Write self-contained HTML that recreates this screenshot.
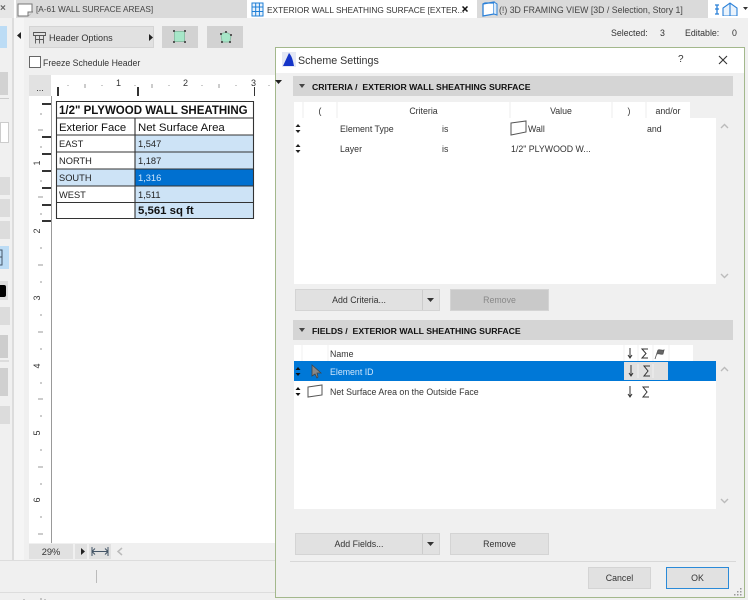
<!DOCTYPE html>
<html><head><meta charset="utf-8"><style>
html,body{margin:0;padding:0;width:748px;height:600px;overflow:hidden;background:#f0f0f0}
#r{position:relative;width:748px;height:600px;overflow:hidden;font-family:"Liberation Sans",sans-serif;font-size:8.8px;color:#333;filter:blur(.35px)}
#r div,#r svg{position:absolute}
.t{white-space:nowrap;line-height:12px;margin-top:1px}
.c{text-align:center}
.b{background:#e1e1e1;border:1px solid #d4d4d4;box-sizing:border-box}
.g{background:#d6d6d6}
.w{background:#fff}
.h{background:#d5d5d5;font-weight:bold;color:#111;font-size:8.7px;line-height:23px;height:20px;white-space:nowrap;box-sizing:border-box;padding-left:19px}
.rh{background:#333;height:1.5px}
.rt{transform:rotate(-90deg);font-size:9px;color:#333;width:12px;text-align:center;line-height:10px}
</style></head><body><div id="r">
<!-- tab bar -->
<div class="w" style="left:0;top:0;width:748px;height:18px"></div>
<div class="g" style="left:0;top:0;width:14px;height:18px;background:#e6e6e6"></div>
<div class="t" style="left:0;top:2px;color:#666;font-weight:bold;font-size:10px">×</div>
<div class="g" style="left:16px;top:0;width:231px;height:18px;background:#dadada"></div>
<div class="g" style="left:477px;top:0;width:231px;height:18px;background:#dadada"></div>
<svg style="left:17px;top:3px" width="18" height="14"><path d="M1 1h14v8l-4 4H1z" fill="#fff" stroke="#777" stroke-width="1"/><path d="M11 13V9h5" fill="#ddd" stroke="#777"/></svg>
<div class="t" style="left:36px;top:3px;color:#444;font-size:8.25px">[A-61 WALL SURFACE AREAS]</div>
<svg style="left:251px;top:1px" width="14" height="16"><path d="M1 2h11v13H1zM1 6h11M1 10.500h11M4.700 2v13M8.400 2v13" fill="#eaf3fc" stroke="#1f7fd6" stroke-width="1"/></svg>
<div class="t" style="left:267px;top:3px;color:#333;font-size:8.3px">EXTERIOR WALL SHEATHING SURFACE [EXTER...</div>
<svg style="left:462px;top:6px" width="6" height="6"><path d="M.5.500l5 5M5.500.500l-5 5" stroke="#111" stroke-width="1.500"/></svg>
<svg style="left:481px;top:1px" width="17" height="17"><path d="M2 3l11-2v12l-11 2zM2 3l2-1h9" fill="#fff" stroke="#2a80d8" stroke-width="1.300"/><path d="M13 1l3 2v11l-3-1" fill="#dcebf9" stroke="#2a80d8"/></svg>
<div class="t" style="left:499px;top:3px;color:#444;font-size:8.75px">(!) 3D FRAMING VIEW [3D / Selection, Story 1]</div>
<svg style="left:714px;top:2px" width="34" height="14"><path d="M1 3h4M3 3v9M1 7h4M1 12h4" fill="none" stroke="#2a80d8" stroke-width="1.300"/><path d="M9 14V6l7-5 7 5v8zM16 1v13" fill="#eaf3fc" stroke="#2a80d8" stroke-width="1.100"/><path d="M29 5h5l-2.500 3z" fill="#333"/></svg>
<!-- left toolbar -->
<div style="left:0;top:26px;width:7px;height:22px;background:#bcdcf5"></div>
<div style="left:0;top:72px;width:8px;height:23px;background:#d2d2d2"></div>
<div style="left:0;top:98px;width:9px;height:1px;background:#ccc"></div>
<div style="left:0;top:122px;width:9px;height:21px;background:#fff;border:1px solid #ccc;box-sizing:border-box"></div>
<div style="left:0;top:177px;width:10px;height:18px;background:#dcdcdc"></div>
<div style="left:0;top:199px;width:10px;height:18px;background:#dcdcdc"></div>
<div style="left:0;top:221px;width:10px;height:18px;background:#dcdcdc"></div>
<div style="left:0;top:246px;width:9px;height:23px;background:#bcdcf5"></div>
<svg style="left:0;top:249px" width="4" height="17"><path d="M-3 1h5v15h-5M-3 8h5" fill="none" stroke="#456"/></svg>
<div style="left:0;top:281px;width:8px;height:19px;background:#dcdcdc"></div>
<div style="left:0;top:285px;width:6px;height:12px;background:#000;border-radius:0 2px 2px 0"></div>
<div style="left:0;top:307px;width:10px;height:18px;background:#dcdcdc"></div>
<div style="left:0;top:335px;width:8px;height:23px;background:#cdcdcd"></div>
<div style="left:0;top:360px;width:9px;height:2px;background:#ddd"></div>
<div style="left:0;top:368px;width:8px;height:28px;background:#d0d0d0"></div>
<div style="left:0;top:406px;width:10px;height:18px;background:#dcdcdc"></div>
<!-- vertical separators -->
<div style="left:12px;top:18px;width:2px;height:542px;background:#dcdcdc"></div>
<div style="left:14px;top:18px;width:10px;height:542px;background:#f5f5f5"></div>
<svg style="left:17px;top:32px" width="5" height="8"><path d="M4 0v7L0 3.500z" fill="#222"/></svg>
<!-- header options -->
<div class="b" style="left:29px;top:26px;width:125px;height:22px"></div>
<svg style="left:32px;top:31px" width="15" height="13"><path d="M1.500 1.500h12v3h-12zM3.500 4.500v8M11.500 4.500v8M7.500 4.500v8M3.500 8.500h8" fill="none" stroke="#555" stroke-width=".9"/></svg>
<div class="t" style="left:49px;top:31px;color:#333;font-size:9.1px">Header Options</div>
<svg style="left:149px;top:34px" width="5" height="7"><path d="M0 0v7l4-3.500z" fill="#222"/></svg>
<div style="left:162px;top:26px;width:36px;height:22px;background:#d2d2d2"></div>
<div style="left:207px;top:26px;width:36px;height:22px;background:#d2d2d2"></div>
<svg style="left:172px;top:29px" width="16" height="16"><rect x="2.500" y="2.500" width="10" height="10" fill="#a7e6c8" stroke="#8cbfa6"/><path d="M1 1h2v2H1zM12 1h2v2h-2zM1 12h2v2H1zM12 12h2v2h-2z" fill="#555"/></svg>
<svg style="left:218px;top:29px" width="16" height="16"><path d="M3 5l5-2 5 3-1 7H4z" fill="#a7e6c8" stroke="#8cbfa6"/><path d="M2 4h2v2H2zM7 2h2v2H7zM12 5h2v2h-2zM3 12h2v2H3zM11 12h2v2h-2z" fill="#555"/></svg>
<div style="left:29px;top:56px;width:12px;height:12px;background:#fff;border:1px solid #666;box-sizing:border-box"></div>
<div class="t" style="left:43px;top:56px;color:#333;font-size:8.75px">Freeze Schedule Header</div>
<!-- rulers and canvas -->
<div class="w" style="left:29px;top:75px;width:247px;height:468px"></div>
<div style="left:29px;top:75px;width:22px;height:21px;background:#e2e2e2"></div>
<div class="t c" style="left:29px;top:81px;width:22px;font-size:9px;color:#333">...</div>
<div style="left:51px;top:96px;width:1px;height:447px;background:#999"></div>
<!-- top ruler -->
<div style="left:57px;top:87px;width:1.500px;height:9px;background:#333"></div>
<div style="left:137px;top:87px;width:1.500px;height:9px;background:#333"></div>
<div style="left:253.500px;top:87px;width:1.500px;height:9px;background:#333"></div>
<div class="t" style="left:116px;top:76px;font-size:9px">1</div>
<div class="t" style="left:183px;top:76px;font-size:9px">2</div>
<div class="t" style="left:251px;top:76px;font-size:9px">3</div>
<svg style="left:60px;top:82px" width="215" height="6"><path d="M8 3v1M25 2v4M42 3v1M75 3v1M92 2v4M109 3v1M142 3v1M159 2v4M176 3v1M209 3v1" stroke="#999" stroke-width="1"/></svg>
<!-- vertical ruler heavy -->
<div class="rh" style="left:42px;top:103px;width:9px"></div>
<div class="rh" style="left:42px;top:136px;width:9px"></div>
<div class="rh" style="left:42px;top:153px;width:9px"></div>
<div class="rh" style="left:42px;top:170px;width:9px"></div>
<div class="rh" style="left:42px;top:187px;width:9px"></div>
<div class="rh" style="left:42px;top:204px;width:9px"></div>
<div class="rh" style="left:42px;top:220px;width:9px"></div>
<svg style="left:36px;top:100px" width="10" height="445"><path d="M4 14h2M2 30h5M4 47h2M4 81h2M2 97h5M4 114h2M4 148h2M2 165h5M4 182h2M4 215h2M2 232h5M4 249h2M4 283h2M2 299h5M4 316h2M4 350h2M2 367h5M4 384h2M4 417h2M2 434h5" stroke="#999" stroke-width="1" fill="none"/></svg>
<div class="rt" style="left:31px;top:158px">1</div>
<div class="rt" style="left:31px;top:226px">2</div>
<div class="rt" style="left:31px;top:293px">3</div>
<div class="rt" style="left:31px;top:361px">4</div>
<div class="rt" style="left:31px;top:428px">5</div>
<div class="rt" style="left:31px;top:495px">6</div>
<!-- schedule table -->
<div style="left:56px;top:101px;width:197px;height:118px;background:#fff"></div>
<div style="left:135px;top:135px;width:118px;height:84px;background:#cde3f6"></div>
<div style="left:56px;top:169px;width:79px;height:17px;background:#cde3f6"></div>
<div style="left:135px;top:169px;width:118px;height:17px;background:#0070d0"></div>
<svg style="left:54.500px;top:100px" width="200" height="120"><path d="M1.500 1.500h197v117H1.500zM1.500 18h197M1.500 35h197M1.500 52h197M1.500 69h197M1.500 86h197M1.500 102.500h197M80 18v100.500" fill="none" stroke="#333" stroke-width="1.100"/></svg>
<div class="t" style="left:59px;top:104px;font-weight:bold;font-size:11.5px;color:#111">1/2" PLYWOOD WALL SHEATHING</div>
<div class="t" style="left:59px;top:120.500px;font-size:11.3px;color:#111">Exterior Face</div>
<div class="t" style="left:138px;top:120.500px;font-size:11.4px;color:#111">Net Surface Area</div>
<div class="t" style="left:59px;top:137px;font-size:9.300px;color:#222">EAST</div>
<div class="t" style="left:59px;top:154px;font-size:9.300px;color:#222">NORTH</div>
<div class="t" style="left:59px;top:171px;font-size:9.300px;color:#222">SOUTH</div>
<div class="t" style="left:59px;top:188px;font-size:9.300px;color:#222">WEST</div>
<div class="t" style="left:138px;top:137px;font-size:9.300px;color:#222">1,547</div>
<div class="t" style="left:138px;top:154px;font-size:9.300px;color:#222">1,187</div>
<div class="t" style="left:138px;top:171px;font-size:9.300px;color:#cfe6fb">1,316</div>
<div class="t" style="left:138px;top:188px;font-size:9.300px;color:#222">1,511</div>
<div class="t" style="left:138px;top:204px;font-size:11.4px;font-weight:bold;color:#111">5,561 sq ft</div>
<!-- bottom status -->
<div style="left:29px;top:543px;width:246px;height:17px;background:#f0f0f0"></div>
<div style="left:29px;top:544px;width:44px;height:15px;background:#e1e1e1"></div>
<div class="t c" style="left:29px;top:545px;width:44px;font-size:9.300px">29%</div>
<div style="left:75px;top:544px;width:12px;height:15px;background:#e1e1e1"></div>
<svg style="left:81px;top:548px" width="5" height="7"><path d="M0 0v7l4-3.500z" fill="#222"/></svg>
<div style="left:89px;top:544px;width:22px;height:15px;background:#e1e1e1"></div>
<svg style="left:90px;top:546px" width="20" height="11"><path d="M2 1v9M18 1v9M2 5.500h16M2 5.500l3-3M2 5.500l3 3M18 5.500l-3-3M18 5.500l-3 3" fill="none" stroke="#456" stroke-width="1"/></svg>
<svg style="left:116px;top:547px" width="7" height="9"><path d="M6 1L2 4.500 6 8" fill="none" stroke="#bbb" stroke-width="1.500"/></svg>
<div style="left:0;top:560px;width:275px;height:1px;background:#ddd"></div>
<div style="left:96px;top:570px;width:1px;height:13px;background:#bbb"></div>
<div style="left:0;top:592px;width:275px;height:1px;background:#ddd"></div>
<svg style="left:20px;top:598px" width="26" height="2"><path d="M4 1v1M21 0v2M25 1v1" stroke="#999"/></svg>
<!-- dialog -->
<div style="left:275px;top:47px;width:470px;height:551px;background:#f0f0f0;border:1px solid #a3b88c;box-sizing:border-box"></div>
<div class="w" style="left:276px;top:48px;width:468px;height:25px"></div>
<svg style="left:282px;top:52px" width="14" height="15"><rect width="14" height="15" fill="#e4e8f4"/><path d="M1 14L7 1c3 3 4 8 5 13z" fill="#1434c8"/></svg>
<div class="t" style="left:298px;top:53.500px;font-size:10.7px;color:#333">Scheme Settings</div>
<div class="t" style="left:678px;top:53px;font-size:10px">?</div>
<svg style="left:718px;top:55px" width="10" height="10"><path d="M1 1l8 8M9 1l-8 8" stroke="#333" stroke-width="1.100"/></svg>
<svg style="left:275px;top:80px" width="8" height="5"><path d="M0 0h7L3.500 4z" fill="#222"/></svg>
<div class="h" style="left:293px;top:76px;width:440px"><span>CRITERIA / &nbsp;EXTERIOR WALL SHEATHING SURFACE</span></div>
<svg style="left:299px;top:84px" width="7" height="5"><path d="M0 0h6L3 4z" fill="#444"/></svg>
<div class="w" style="left:294px;top:102px;width:396px;height:16px"></div>
<div class="w" style="left:294px;top:118px;width:422px;height:166px"></div>
<svg style="left:294px;top:102px" width="396" height="16"><path d="M9 0v16M43 0v16M216 0v16M318 0v16M352 0v16" stroke="#eee"/></svg>
<div class="t c" style="left:303px;top:104px;width:34px">(</div>
<div class="t c" style="left:337px;top:104px;width:173px">Criteria</div>
<div class="t c" style="left:510px;top:104px;width:102px">Value</div>
<div class="t c" style="left:612px;top:104px;width:34px">)</div>
<div class="t c" style="left:646px;top:104px;width:44px">and/or</div>
<svg style="left:295px;top:124px" width="6" height="9"><path d="M3 0l2.500 3h-5zM3 9L.5 6h5z" fill="#222"/></svg>
<svg style="left:295px;top:144px" width="6" height="9"><path d="M3 0l2.500 3h-5zM3 9L.5 6h5z" fill="#222"/></svg>
<div class="t" style="left:340px;top:122px">Element Type</div>
<div class="t" style="left:442px;top:122px">is</div>
<svg style="left:510px;top:120px" width="18" height="17"><path d="M1 3l15-2v11L1 15z" fill="#fff" stroke="#555" stroke-width="1"/></svg>
<div class="t" style="left:528px;top:122px">Wall</div>
<div class="t" style="left:647px;top:122px">and</div>
<div class="t" style="left:340px;top:142px">Layer</div>
<div class="t" style="left:442px;top:142px">is</div>
<div class="t" style="left:511px;top:142px">1/2" PLYWOOD W...</div>
<svg style="left:720px;top:123px" width="9" height="6"><path d="M1 5l3.500-3.500L8 5" fill="none" stroke="#bbb" stroke-width="1.400"/></svg>
<svg style="left:720px;top:273px" width="9" height="6"><path d="M1 1l3.500 3.500L8 1" fill="none" stroke="#bbb" stroke-width="1.400"/></svg>
<!-- criteria buttons -->
<div class="b" style="left:295px;top:289px;width:145px;height:22px"></div>
<div style="left:422px;top:290px;width:1px;height:20px;background:#ccc"></div>
<div class="t c" style="left:296px;top:293px;width:126px">Add Criteria...</div>
<svg style="left:427px;top:298px" width="8" height="5"><path d="M0 0h7L3.500 4z" fill="#333"/></svg>
<div class="b" style="left:450px;top:289px;width:99px;height:22px;background:#c9c9c9"></div>
<div class="t c" style="left:450px;top:293px;width:99px;color:#888">Remove</div>
<!-- fields -->
<div class="h" style="left:293px;top:320px;width:440px"><span>FIELDS / &nbsp;EXTERIOR WALL SHEATHING SURFACE</span></div>
<svg style="left:299px;top:328px" width="7" height="5"><path d="M0 0h6L3 4z" fill="#444"/></svg>
<div class="w" style="left:294px;top:345px;width:399px;height:16px"></div>
<svg style="left:294px;top:345px" width="399" height="16"><path d="M8 0v16M34 0v16M330 0v16M344 0v16M359 0v16M375 0v16" stroke="#f2f2f2"/></svg>
<div class="t" style="left:330px;top:347px">Name</div>
<div class="w" style="left:294px;top:361px;width:422px;height:148px"></div>
<div style="left:294px;top:361px;width:422px;height:20px;background:#0078d7"></div>
<svg style="left:626px;top:347px" width="44" height="13"><path d="M4 1v10M2 8l2 3 2-3" fill="none" stroke="#333"/><path d="M22 2h-6l4 4.500-4 4.500h6" fill="none" stroke="#333"/><path d="M29 12l3-9M32 3c2-1 4 1 6 0l-1 4c-2 1-4-1-6 0" fill="#666" stroke="#555" stroke-width=".8"/></svg>
<div style="left:624px;top:362px;width:44px;height:18px;background:#e0e0e0"></div>
<svg style="left:626px;top:364px" width="30" height="14"><path d="M5 1v11M3 9l2 3 2-3" fill="none" stroke="#333"/><path d="M24 2h-6l4 5-4 5h6" fill="none" stroke="#333"/><path d="M12 0v14M27 0v14" stroke="#fff" stroke-opacity=".5"/></svg>
<svg style="left:295px;top:367px" width="6" height="9"><path d="M3 0l2.500 3h-5zM3 9L.5 6h5z" fill="#111"/></svg>
<svg style="left:295px;top:387px" width="6" height="9"><path d="M3 0l2.500 3h-5zM3 9L.5 6h5z" fill="#111"/></svg>
<svg style="left:310px;top:364px" width="12" height="15"><path d="M2 1v11l3-2 2 4 1-1-1-4h4z" fill="#888" stroke="#444" stroke-width=".8"/></svg>
<svg style="left:306px;top:384px" width="18" height="15"><path d="M2 3l14-2v10L2 13z" fill="#fff" stroke="#555"/></svg>
<div class="t" style="left:330px;top:365px;color:#cfe6fb">Element ID</div>
<div class="t" style="left:330px;top:385px;color:#333">Net Surface Area on the Outside Face</div>
<svg style="left:626px;top:385px" width="30" height="14"><path d="M4 1v11M2 9l2 3 2-3" fill="none" stroke="#333"/><path d="M23 2h-6l4 5-4 5h6" fill="none" stroke="#333"/></svg>
<svg style="left:720px;top:366px" width="9" height="6"><path d="M1 5l3.500-3.500L8 5" fill="none" stroke="#bbb" stroke-width="1.400"/></svg>
<svg style="left:720px;top:498px" width="9" height="6"><path d="M1 1l3.500 3.500L8 1" fill="none" stroke="#bbb" stroke-width="1.400"/></svg>
<!-- fields buttons -->
<div class="b" style="left:295px;top:533px;width:145px;height:22px"></div>
<div style="left:422px;top:534px;width:1px;height:20px;background:#ccc"></div>
<div class="t c" style="left:296px;top:537px;width:126px">Add Fields...</div>
<svg style="left:427px;top:542px" width="8" height="5"><path d="M0 0h7L3.500 4z" fill="#333"/></svg>
<div class="b" style="left:450px;top:533px;width:99px;height:22px"></div>
<div class="t c" style="left:450px;top:537px;width:99px">Remove</div>
<div style="left:290px;top:561px;width:446px;height:1px;background:#d8d8d8"></div>
<div class="b" style="left:588px;top:567px;width:63px;height:22px"></div>
<div class="t c" style="left:588px;top:571px;width:63px">Cancel</div>
<div class="b" style="left:666px;top:567px;width:63px;height:22px;border-color:#2a8ad8"></div>
<div class="t c" style="left:666px;top:571px;width:63px">OK</div>
<svg style="left:733px;top:587px" width="10" height="9"><path d="M7 1h1.500v1.500H7zM4 4h1.500v1.500H4zM7 4h1.500v1.500H7zM1 7h1.500v1.500H1zM4 7h1.500v1.500H4zM7 7h1.500v1.500H7z" fill="#999"/></svg>
<!-- header status -->
<div class="t" style="left:611px;top:26px;color:#333">Selected:</div>
<div class="t" style="left:660px;top:26px;color:#333">3</div>
<div class="t" style="left:685px;top:26px;color:#333">Editable:</div>
<div class="t" style="left:732px;top:26px;color:#333">0</div>
</div></body></html>
